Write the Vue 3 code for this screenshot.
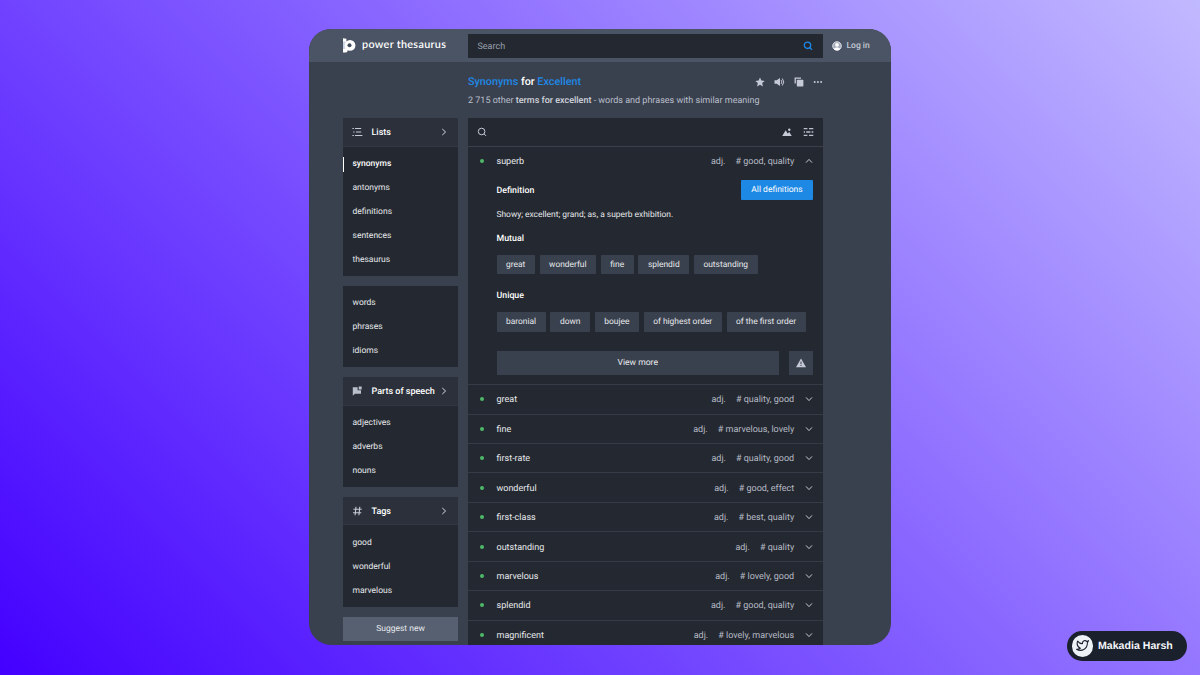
<script setup>
const groups = [
  { title: 'Lists', icon: 'list', items: ['synonyms', 'antonyms', 'definitions', 'sentences', 'thesaurus'] },
  { items: ['words', 'phrases', 'idioms'] },
  { title: 'Parts of speech', icon: 'flag', items: ['adjectives', 'adverbs', 'nouns'] },
  { title: 'Tags', icon: 'hash', items: ['good', 'wonderful', 'marvelous'] },
]
const mutual = ['great', 'wonderful', 'fine', 'splendid', 'outstanding']
const unique = ['baronial', 'down', 'boujee', 'of highest order', 'of the first order']
const terms = [
  ['great', '# quality, good'],
  ['fine', '# marvelous, lovely'],
  ['first-rate', '# quality, good'],
  ['wonderful', '# good, effect'],
  ['first-class', '# best, quality'],
  ['outstanding', '# quality'],
  ['marvelous', '# lovely, good'],
  ['splendid', '# good, quality'],
  ['magnificent', '# lovely, marvelous'],
]
</script>

<template>
  <div class="stage">
    <div class="window">
      <header class="top">
        <div class="brand">
          <svg width="13" height="15" viewBox="0 0 13 15">
            <path d="M0 .2L3.4 .8V4H0Z" fill="#fff" />
            <path d="M0 3.5H4V11.5H0Z" fill="#c9d3e6" />
            <circle cx="7" cy="7.4" r="5.4" fill="#fff" />
            <path d="M0 11L4.6 10.5V13.2L3.2 14.4H0Z" fill="#fff" />
            <circle cx="6.5" cy="7.2" r="2" fill="#414b5b" />
          </svg>
          <span>power thesaurus</span>
        </div>
        <div class="search">
          <span>Search</span>
          <svg width="10" height="10" viewBox="0 0 10 10" fill="none" stroke="#1e88e5" stroke-width="1.3">
            <circle cx="4.5" cy="4.3" r="3.2" /><path d="M6.8 6.6L9 8.8" />
          </svg>
        </div>
        <div class="login">
          <svg width="10" height="10" viewBox="0 0 10 10">
            <circle cx="5" cy="5" r="4.3" fill="#a3aab7" stroke="#e6e9ee" stroke-width=".9" />
            <circle cx="5" cy="3.9" r="1.9" fill="#fff" />
            <path d="M1.8 8C2.3 5.9 7.7 5.9 8.2 8C6.7 9.7 3.3 9.7 1.8 8Z" fill="#fff" />
          </svg>
          <span>Log in</span>
        </div>
      </header>

      <div class="heading">
        <div class="title-row">
          <h1><b>Synonyms</b> for <b>Excellent</b></h1>
          <div class="tools">
            <svg width="10" height="10" viewBox="0 0 10 10"><path d="M5 .4L6.4 3.5L9.7 3.9L7.2 6.1L7.9 9.4L5 7.7L2.1 9.4L2.8 6.1L.3 3.9L3.6 3.5Z" fill="#c5cad6" /></svg>
            <svg width="11" height="10" viewBox="0 0 11 10"><path d="M.5 3.3H2.7L6 .9V9.1L2.7 6.7H.5Z" fill="#c5cad6" /><path d="M7.2 3.1Q8.6 5 7.2 6.9M8.3 1.5Q11.3 5 8.3 8.5" fill="none" stroke="#c5cad6" stroke-width="1" /></svg>
            <svg width="10" height="10" viewBox="0 0 10 10"><path d="M1.2 6.5V1.1H7" fill="none" stroke="#c5cad6" stroke-width="1.3" /><rect x="2.8" y="2.8" width="6.6" height="6.6" rx=".6" fill="#c5cad6" /></svg>
            <svg width="10" height="10" viewBox="0 0 10 10" fill="#c5cad6"><circle cx="1.7" cy="5" r="1" /><circle cx="4.9" cy="5" r="1" /><circle cx="8.1" cy="5" r="1" /></svg>
          </div>
        </div>
        <p>2 715 other <b>terms for excellent</b> - words and phrases with similar meaning</p>
      </div>

      <div class="columns">
        <aside>
          <section v-for="(g, gi) in groups" :key="gi" class="card">
            <div v-if="g.title" class="card-head">
              <svg v-if="g.icon === 'list'" width="11" height="10" viewBox="0 0 11 10" stroke="#c5cad6" stroke-width="1"><path d="M3 1.5H9.2M4 5H9.2M3 8.5H10.4M.4 1.5H1.9M1.2 5H2.6M.4 8.5H1.9" /></svg>
              <svg v-else-if="g.icon === 'flag'" width="11" height="10" viewBox="0 0 11 10" fill="#b9bfcb"><path d="M.8 1.2H5.6V4.3H9V7.8H2.9L.8 9.8Z" /><rect x="6.7" y=".5" width="3" height="3" /></svg>
              <svg v-else width="11" height="10" viewBox="0 0 11 10" stroke="#c5cad6" stroke-width="1.1"><path d="M4 .8L3.1 9.2M7.8 .8L6.9 9.2M1.4 3.3H9.7M1 6.7H9.3" /></svg>
              <span>{{ g.title }}</span>
              <svg width="6" height="8" viewBox="0 0 6 8" fill="none" stroke="#d3d7df" stroke-width="1"><path d="M1.3 1L4.6 4L1.3 7" /></svg>
            </div>
            <ul>
              <li v-for="(it, i) in g.items" :key="it" :class="{ active: gi === 0 && i === 0 }">{{ it }}</li>
            </ul>
          </section>
          <div class="suggest">Suggest new</div>
        </aside>

        <main>
          <div class="filter">
            <svg width="10" height="10" viewBox="0 0 10 10" fill="none" stroke="#c5cad6" stroke-width="1"><circle cx="4.6" cy="4.5" r="3.3" /><path d="M7 6.9L9 8.9" /></svg>
            <div class="filter-tools">
              <svg width="10" height="10" viewBox="0 0 10 10" fill="#c5cad6"><path d="M.2 9L3.7 3.3L5.7 6.4L7.2 4.9L9.8 9Z" /><circle cx="7.3" cy="2.7" r="1.2" /></svg>
              <svg width="11" height="10" viewBox="0 0 11 10" stroke="#b9bfcb" stroke-width="1.3"><path d="M.7 1.7H4.4M6 1.7H10.3M.7 5H2M3.2 5H7.4M8.6 5H10.3M.7 8.3H4.4M6 8.3H10.3" /></svg>
            </div>
          </div>
          <div class="term first">
            <i></i><span class="word">superb</span><span class="pos">adj.</span><span>#&nbsp;good, quality</span>
            <svg width="8" height="6" viewBox="0 0 8 6" fill="none" stroke="#c5cad6" stroke-width="1"><path d="M1 4.6L4 1.4L7 4.6" /></svg>
          </div>
          <div class="detail">
            <div class="def-row"><h2>Definition</h2><div class="blue">All definitions</div></div>
            <p>Showy; excellent; grand; as, a superb exhibition.</p>
            <h2 class="label">Mutual</h2>
            <div class="chips"><span v-for="c in mutual" :key="c">{{ c }}</span></div>
            <h2 class="label second">Unique</h2>
            <div class="chips"><span v-for="c in unique" :key="c">{{ c }}</span></div>
            <div class="more-row">
              <div class="more">View more</div>
              <div class="warn">
                <svg width="10" height="10" viewBox="0 0 10 10"><path d="M5 .4L10 9.3H0Z" fill="#c5cad6" /><path d="M5 3.6V6.2M5 7V8" stroke="#3a414e" stroke-width="1" /></svg>
              </div>
            </div>
          </div>
          <div v-for="t in terms" :key="t[0]" class="term">
            <i></i><span class="word">{{ t[0] }}</span><span class="pos">adj.</span><span>{{ t[1] }}</span>
            <svg width="8" height="6" viewBox="0 0 8 6" fill="none" stroke="#c5cad6" stroke-width="1"><path d="M1 1.4L4 4.6L7 1.4" /></svg>
          </div>
        </main>
      </div>
    </div>

    <div class="author">
      <div class="avatar">
        <svg width="13" height="13" viewBox="0 0 24 24" fill="none" stroke="#1a202c" stroke-width="2" stroke-linejoin="round" stroke-linecap="round"><path d="M23 3a10.9 10.9 0 0 1-3.14 1.53 4.48 4.48 0 0 0-7.86 3v1A10.66 10.66 0 0 1 3 4s-4 9 5 13a11.64 11.64 0 0 1-7 2c9 5 20 0 20-11.5a4.5 4.5 0 0 0-.08-.83A7.72 7.72 0 0 0 23 3z" /></svg>
      </div>
      <span>Makadia Harsh</span>
    </div>
  </div>
</template>

<style>
html, body { margin: 0; overflow: hidden; }
</style>

<style scoped>
* { box-sizing: border-box; }
.stage {
  position: relative;
  width: 1200px;
  height: 675px;
  padding: 29px 309px 0;
  background: linear-gradient(45deg, #4300ff, #c1b9ff);
  font-family: Roboto, sans-serif;
  font-size: 8.5px;
  text-rendering: geometricPrecision;
  color: #e6e8ec;
  overflow: hidden;
}
.window {
  width: 582px;
  height: 616px;
  border-radius: 22px;
  overflow: hidden;
  background: #3a414e;
}
h1, h2, p, ul { margin: 0; padding: 0; }
.top { display: flex; height: 33px; padding-left: 34px; background: #4a5464; }
.brand { display: flex; align-items: center; width: 125px; gap: 6px; font: 600 10.8px Lato, sans-serif; color: #fff; letter-spacing: .31px; }
.brand span { margin-top: -2px; }
.search {
  display: flex; align-items: center; justify-content: space-between;
  width: 355px; height: 24px; margin-top: 5px; padding: 0 10px 0 9.5px;
  background: #242830; color: #98a0ad; font-size: 9px;
}
.search span, .card-head span, .term span { padding-top: 2px; }
.login { display: flex; align-items: center; gap: 4.5px; margin-left: 9px; color: #c5cad6; font-weight: 500; }
.heading { padding: 13px 68px 0 159px; height: 56px; }
.title-row { display: flex; justify-content: space-between; align-items: center; height: 13px; }
h1 { font-size: 10.8px; font-weight: 500; color: #fff; }
h1 b { color: #1e88e5; font-weight: 500; }
.tools { display: flex; gap: 9px; }
.heading p { margin-top: 7px; line-height: 13px; color: #b9bfcb; font-size: 9px; }
.heading p b { font-weight: 500; color: #d0d4dc; }
.columns { display: flex; gap: 10px; padding-left: 34px; }
aside { display: flex; flex-direction: column; gap: 10px; width: 115px; }
.card { background: #242830; }
.card-head {
  display: flex; align-items: center; height: 28.5px; padding: 0 11px 0 9px;
  background: #2b303a; border-bottom: 1px solid #323843; color: #fff; font-weight: 500; font-size: 9px;
}
.card-head span { flex: 1; margin-left: 8.5px; white-space: nowrap; }
ul { list-style: none; padding: 4.5px 0 4.8px; }
li { position: relative; height: 24px; line-height: 26px; padding-left: 9.5px; }
li.active { color: #fff; font-weight: 500; }
li.active::before { content: ''; position: absolute; left: 0; top: 6px; width: 1px; height: 15px; background: #fff; }
.suggest { height: 24px; line-height: 25.5px; text-align: center; background: #566071; }
main { width: 355px; background: #242830; }
.filter { display: flex; align-items: center; justify-content: space-between; height: 28.5px; padding: 0 9px; border-bottom: 1px solid #3a414e; }
.filter-tools { display: flex; gap: 11.5px; }
.term { display: flex; align-items: center; height: 29.45px; padding: 0 10.3px 0 12px; border-top: 1px solid #363c47; color: #b5bac5; font-size: 9px; }
.term.first { border-top: 0; }
.term i { width: 4px; height: 4px; border-radius: 50%; background: #4fb868; }
.term .word { flex: 1; margin-left: 12.5px; color: #e6e8ec; }
.pos { margin-right: 10px; }
.term svg { margin-left: 10.5px; }
.detail { height: 208.2px; padding: 4px 10px 0 28.5px; font-size: 8.42px; }
.def-row { display: flex; justify-content: space-between; align-items: center; height: 20px; }
h2 { font-size: 8.8px; font-weight: 500; color: #fff; }
.def-row h2 { padding-top: 2px; }
.blue { width: 72px; height: 19.5px; line-height: 21.5px; text-align: center; background: #1e88e5; color: #fff; border-radius: 1px; font-size: 8.5px; }
.detail p { margin-top: 8px; height: 12px; line-height: 14px; }
.label { margin-top: 12px; height: 12px; line-height: 14px; }
.chips { display: flex; gap: 4.8px; margin-top: 10.8px; }
.chips span { height: 19.5px; line-height: 21.5px; padding: 0 9.5px; border-radius: 1px; background: #3a414e; white-space: nowrap; }
.label.second { margin-top: 15.2px; }
.more-row { display: flex; gap: 10px; margin-top: 19px; }
.more { flex: 1; height: 24px; line-height: 25.5px; text-align: center; background: #3a414e; font-size: 8.6px; }
.warn { display: flex; align-items: center; justify-content: center; width: 24px; background: #3a414e; }
.author {
  position: absolute; left: 1067px; top: 630.5px; width: 120px; height: 30.5px;
  display: flex; align-items: center; gap: 5px; padding-left: 4.5px;
  border-radius: 16px; background: #1a202c; color: #f3f5f9;
  font: 700 10.6px "Liberation Sans", sans-serif;
}
.avatar { display: flex; align-items: center; justify-content: center; width: 21.5px; height: 21.5px; border-radius: 50%; background: #edf2f7; }
</style>
